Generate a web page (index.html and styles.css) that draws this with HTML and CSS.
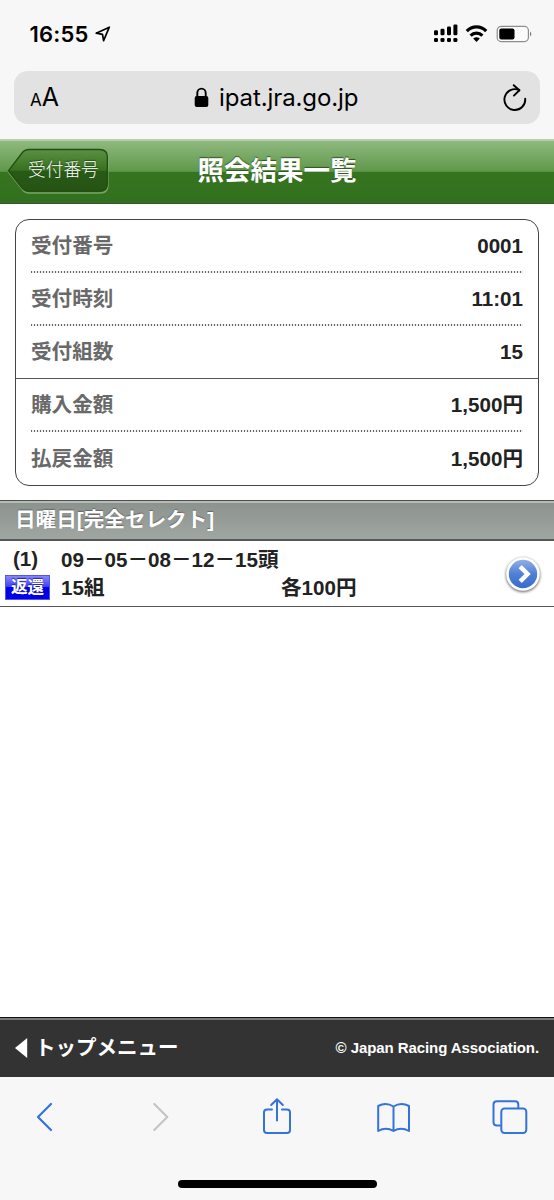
FILE: index.html
```html
<!DOCTYPE html>
<html lang="ja">
<head>
<meta charset="utf-8">
<title>照会結果一覧</title>
<link rel="stylesheet" href="styles.css">
</head>
<body>
<div class="phone">
  <div class="status">
    <span class="time">16:55</span>
    <svg class="loc" width="16" height="17" viewBox="0 0 16 17"><path d="M1.2 7.2 14.3 1.2 8.6 14.7 7.5 8.3Z" fill="none" stroke="#000" stroke-width="1.7" stroke-linejoin="round"/></svg>
    <svg class="signals" width="102" height="22" viewBox="0 0 102 22">
      <g fill="#000">
        <rect x="1" y="8.2" width="4" height="5" rx="1.2"/><rect x="7.5" y="6.7" width="4" height="6.5" rx="1.2"/><rect x="14" y="4.6" width="4" height="8.6" rx="1.2"/><rect x="20.4" y="2.5" width="4" height="10.7" rx="1.2"/>
        <rect x="1" y="16" width="4" height="4" rx="1.2"/><rect x="7.5" y="16" width="4" height="4" rx="1.2"/><rect x="14" y="16" width="4" height="4" rx="1.2"/><rect x="20.4" y="16" width="4" height="4" rx="1.2"/>
      </g>
      <g fill="none" stroke="#000" stroke-width="3.2"><path d="M33.8 9.1a13.3 13.3 0 0 1 19.4 0"/><path d="M37.6 13.6a8.5 8.5 0 0 1 11.8 0"/></g>
      <path d="M40.2 16.6a5 5 0 0 1 6.6 0L43.5 20Z" fill="#000"/>
      <rect x="64.2" y="4.4" width="31.2" height="15.2" rx="4" fill="#fbfbfb" stroke="#8d8d8d" stroke-width="1.2"/>
      <rect x="66.3" y="6.6" width="15.2" height="10.8" rx="2" fill="#000"/>
      <path d="M97 9.5q2.6 2.5 0 5Z" fill="#777"/>
    </svg>
  </div>
  <div class="address">
    <span class="aa"><small>A</small>A</span>
    <svg class="lock" width="15" height="21" viewBox="0 0 15 21"><rect x=".7" y="9" width="13.6" height="11" rx="2" fill="#000"/><path d="M3.3 10V6a4.2 4.4 0 0 1 8.4 0v4" fill="none" stroke="#000" stroke-width="1.9"/></svg>
    <span class="url">ipat.jra.go.jp</span>
    <svg class="reload" width="26" height="30" viewBox="0 0 26 30"><g fill="none" stroke="#000" stroke-width="1.9" stroke-linecap="round" stroke-linejoin="round"><path d="M23.2 15.8A10.4 10.4 0 1 1 17.3 7.2"/><path d="M11.7 2.2 17.4 7.2 11.9 12.6"/></g></svg>
  </div>
  <header class="header">
    <svg class="back-shape" width="103" height="48" viewBox="0 0 103 48">
      <defs><linearGradient id="back" x2="0" y2="1"><stop offset="0" stop-color="#5c9045"/><stop offset=".5" stop-color="#38701f"/><stop offset=".52" stop-color="#285a15"/><stop offset="1" stop-color="#275315"/></linearGradient></defs>
      <path d="M2.4 25 16 7.5Q18.8 4 23 4H94Q102 4 102 12V38Q102 46 94 46H23Q18.8 46 16 42Z" fill="none" stroke="#a4c796" stroke-opacity=".6" stroke-width="1.4"/>
      <path d="M2.4 23.8 16 6Q18.8 2.5 23 2.5H93.5Q101.4 2.5 101.4 10V36.5Q101.4 44.2 93.5 44.2H23Q18.8 44.2 16 41Z" fill="url(#back)" stroke="#22500f" stroke-width="1.4"/>
    </svg>
    <a class="back">受付番号</a>
    <h1>照会結果一覧</h1>
  </header>
  <main>
    <dl class="card">
      <div class="row"><dt>受付番号</dt><dd>0001</dd></div>
      <div class="row"><dt>受付時刻</dt><dd>11:01</dd></div>
      <div class="row last"><dt>受付組数</dt><dd>15</dd></div>
      <div class="row"><dt>購入金額</dt><dd>1,500円</dd></div>
      <div class="row last"><dt>払戻金額</dt><dd>1,500円</dd></div>
    </dl>
    <h2 class="section">日曜日[完全セレクト]</h2>
    <div class="bet">
      <div class="marks"><span class="num">(1)</span><span class="tag">返還</span></div>
      <div class="detail"><span class="horses">09－05－08－12－15頭</span><div class="amounts"><span class="sets">15組</span><span>各100円</span></div></div>
      <svg class="go" width="42" height="42" viewBox="0 0 42 42">
        <defs><linearGradient id="go" x2="0" y2="1"><stop offset="0" stop-color="#91afe6"/><stop offset=".5" stop-color="#5080d4"/><stop offset="1" stop-color="#386bd0"/></linearGradient></defs>
        <circle class="go-rim" cx="21" cy="20" r="16.8" fill="#fff"/><circle cx="21" cy="20" r="14.2" fill="url(#go)"/>
        <path d="M18.2 12.6 25.6 20 18.2 27.4" fill="none" stroke="#fff" stroke-width="4.4"/>
      </svg>
    </div>
  </main>
  <footer class="footer">
    <svg width="13" height="20" viewBox="0 0 13 20"><path d="M0 10 12.2 0V20Z" fill="#fff"/></svg>
    <span class="top">トップメニュー</span>
    <span class="copy">© Japan Racing Association.</span>
  </footer>
  <nav class="toolbar">
    <svg width="554" height="60" viewBox="0 0 554 60" fill="none" stroke="#3472dc" stroke-width="2" stroke-linecap="round" stroke-linejoin="round">
      <path d="M51 20 38 33 51 46" stroke-width="2.2"/>
      <path d="M154.3 20 167.3 33 154.3 46" stroke="#c5c5c5" stroke-width="2.2"/>
      <path d="M272 25.5H267Q264 25.5 264 28.5V46Q264 49 267 49H287Q290 49 290 46V28.5Q290 25.5 287 25.5H282M277 36.5V15.7M271.2 21 277 15.3 282.8 21"/>
      <path d="M393.5 22.5Q386 17.8 378.2 22V47Q386 42.5 393.5 47Q401 42.5 409 47V22Q401 17.8 393.5 22.5V47"/>
      <path d="M500 41.5H497Q493.5 41.5 493.5 38V20.5Q493.5 17.3 497 17.3H515Q518.3 17.3 518.3 20.5V24"/>
      <rect x="501.3" y="24.5" width="25" height="24.5" rx="3.2"/>
    </svg>
    <div class="home"></div>
  </nav>
</div>
</body>
</html>
```
FILE: styles.css
```css
* { box-sizing: border-box; }
body { margin: 0; background: #fff; font-family: "Liberation Sans", "Noto Sans CJK JP", sans-serif; }
svg { display: block; flex: none; }
.phone { width: 554px; height: 1200px; display: flex; flex-direction: column; background: #fff; overflow: hidden; }

.status { height: 71px; background: #f7f7f7; display: flex; align-items: flex-start; padding: 22px 19px 0 29.5px; }
.time { width: 65px; font: 600 22px/25px Inter, sans-serif; letter-spacing: .2px; }
.loc { margin-top: 4px; }
.signals { margin-left: auto; }

.address { height: 53px; margin: 0 14px; background: #e2e2e2; border-radius: 14px; display: flex; align-items: center; padding: 0 12px 0 16px; box-shadow: 0 0 0 30px #f7f7f7; clip-path: inset(0 -14px -15px -14px); }
.aa { width: 164px; font: 400 25px/30px Inter, sans-serif; padding-top: 1px; }
.aa small { font-size: 17px; }
.lock { margin-top: -1px; }
.url { margin-left: 10px; padding-top: 1px; font: 400 24px/30px Inter, sans-serif; letter-spacing: -.1px; white-space: nowrap; }
.reload { margin-left: auto; }

.header { height: 65px; flex: none; margin-top: 15px; display: grid; grid-template-columns: 1fr; align-items: center; color: #fff; border-top: 2px solid #b4cfaa; border-bottom: 1.5px solid #405039; background: linear-gradient(#8fb980 0%, #5f984a 49%, #37741f 50%, #31701f 100%); }
.header > * { grid-area: 1 / 1; }
.back-shape { margin: -3px 0 0 6px; }
.back { z-index: 1; margin: -4px 0 0 28px; font-size: 17.7px; font-weight: 300; line-height: 26px; text-shadow: 0 -1px 1px #23461a; }
h1 { margin: -3px 0 0; text-align: center; font-size: 26.5px; line-height: 38px; text-shadow: 0 -1px 1px #315224; }

main { flex: 1; }
.card { margin: 15px 15px 0; height: 267px; border: 1.5px solid #444; border-radius: 14px; display: grid; grid-template-rows: repeat(5, 1fr); }
.row { display: flex; align-items: center; justify-content: space-between; margin: 0 15px; font-size: 20.6px; font-weight: 700; line-height: 30px; border-bottom: 2px solid; border-image: repeating-linear-gradient(90deg, #666 0 1.4px, #eee 1.4px 3px) 0 0 2; }
.row.last { border-image: none; border-bottom: 1.5px solid #555; margin: 0; padding: 0 15px; }
.row.last:last-child { border: 0; }
dt { color: #696969; }
dd { margin: 0; color: #222; }

.section { height: 41px; margin: 14px 0 0; padding: 0 15px; border-top: 1px solid #4b504d; border-bottom: 2px solid #555a58; box-shadow: inset 0 2px #b5bbb7; background: linear-gradient(#8b928d, #a0a6a1); color: #fff; font-size: 20.6px; line-height: 38px; text-shadow: 0 -1px 1px #666; }
.bet { height: 66px; display: flex; align-items: center; border-bottom: 1.5px solid #555; font-size: 20.6px; font-weight: 700; color: #222; line-height: 28px; }
.marks { width: 61px; display: flex; flex-direction: column; padding-left: 5px; }
.num { padding-left: 8px; line-height: 28px; margin-top: -2px; }
.tag { width: 45px; height: 25px; margin-top: 2px; color: #fff; text-align: center; font-size: 16.5px; line-height: 23px; border: 1px solid #5555ec; background: linear-gradient(#8888fa 0%, #3f3ff0 48%, #0000e6 50%, #0000ea 100%); text-shadow: 0 -1px 1px #22a; }
.detail { display: flex; flex-direction: column; }
.amounts { display: flex; }
.sets { width: 220px; }
.go { margin: 2px 10px 0 auto; }
.go-rim { filter: drop-shadow(0 1px 1.5px #555); }

.footer { height: 60px; flex: none; border-top: 1px solid #111; box-shadow: inset 0 2px #777c79; background: #333; display: flex; align-items: center; padding: 0 15px; color: #fff; font-weight: 700; }
.top { margin-left: 7px; font-size: 20.5px; line-height: 30px; }
.copy { margin-left: auto; font-size: 15px; letter-spacing: -.08px; line-height: 30px; }

.toolbar { height: 123px; flex: none; background: #f7f7f7; padding-top: 7px; }
.home { width: 199px; height: 8px; margin: 36px auto 0; border-radius: 4px; background: #000; }
```
